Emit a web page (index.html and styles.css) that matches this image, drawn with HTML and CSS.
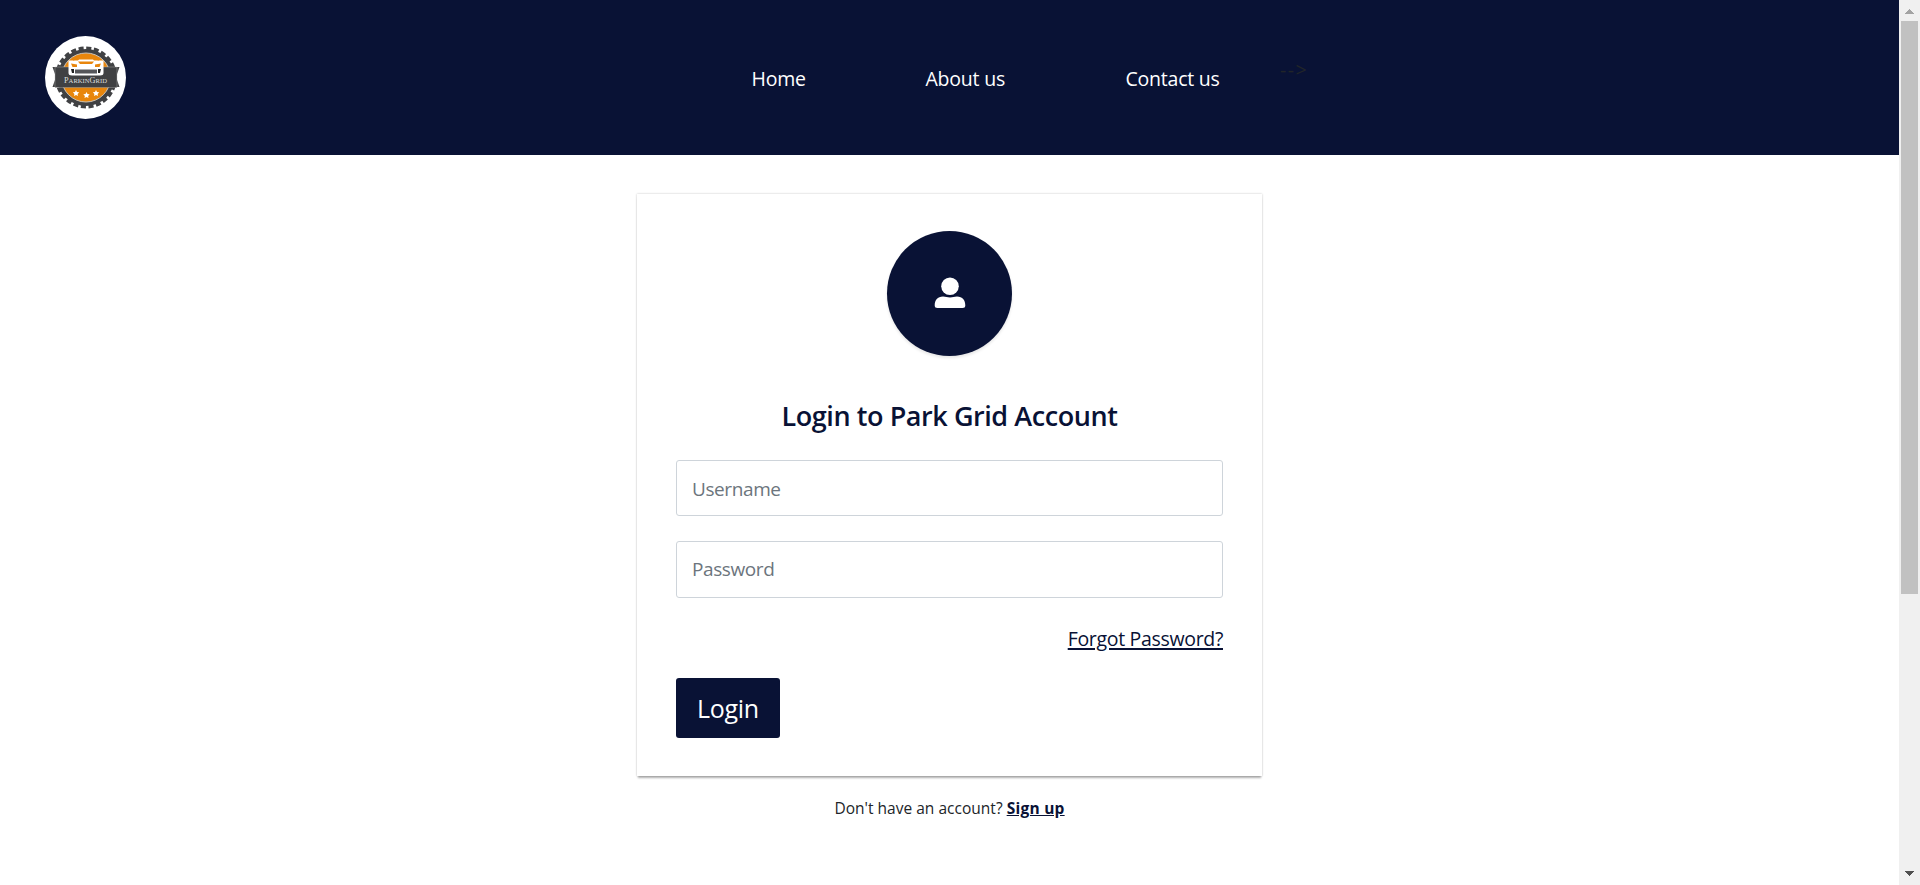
FILE: index.html
```html
<!DOCTYPE html>
<html lang="en">
<head>
<meta charset="utf-8">
<title>Park Grid Login</title>
<link rel="stylesheet" href="styles.css">
</head>
<body>
<div class="page">
  <header class="header">
    <svg class="logo" viewBox="0 0 81 83">
      <ellipse cx="40.5" cy="41.5" rx="40.5" ry="41.5" fill="#fff"/>
      <circle cx="41" cy="41.500" r="28.500" fill="#404143"/>
      <circle cx="41" cy="41.500" r="29" fill="none" stroke="#404143" stroke-width="4" stroke-dasharray="5 2.592"/>
      <circle cx="41" cy="41.500" r="24.500" fill="#e8860c" stroke="#c9c2b8" stroke-width="1"/>
      <path d="M7.500 31H15V51H7.500L11 41Z M74.500 31H67V51H74.500L71 41Z" fill="#404143"/>
      <path d="M10 31H72V51.500H10Z" fill="#404143" stroke="#b5b5b5" stroke-width=".4"/>
      <path d="M23.500 24.500H29L32 21.500H50L53 24.500H58.500V37Q58.500 39.500 55 39.500H27Q23.500 39.500 23.500 37V24.500Z" fill="#fff"/>
      <path d="M28 24.500L31 20.500H51L54 24.500H49L48 23.500H34L33 24.500Z" fill="#e8860c"/>
      <path d="M33 25.500H49L47 28H35Z" fill="#e8860c"/>
      <path d="M26 27.500L32 28.500V31H27.500Z M56 27.500L50 28.500V31H54.500Z" fill="#e8860c"/>
      <path d="M30 33.500H52V37.500H30Z" fill="#55565a"/>
      <path d="M26 33H29V37H27Z M56 33H53V37H55Z" fill="#222"/>
      <text x="19" y="47.300" textLength="43" lengthAdjust="spacingAndGlyphs" class="logo-text">P<tspan class="small">ARKIN</tspan>G<tspan class="small">RID</tspan></text>
      <g fill="#fff">
        <path id="star" d="M31 54L32 56L34.200 56.300L32.600 57.900L33 60L31 59L29 60L29.400 57.900L27.800 56.300L30 56Z"/>
        <use href="#star" x="10.500" y="2"/>
        <use href="#star" x="20" y="0"/>
      </g>
    </svg>
    <nav class="nav">
      <a class="home">Home</a><a class="about">About us</a><a class="contact">Contact us</a>
      <span class="stray">--&gt;</span>
    </nav>
  </header>
  <main class="main">
    <section class="card">
      <div class="avatar">
        <svg class="user" viewBox="0 0 32 32"><circle cx="16" cy="9.300" r="8.800" fill="#fff"/><path d="M9 19.500C12 19.500 13 20.500 16 20.500S20 19.500 23 19.500C28.500 19.500 31.300 23 31.300 28.500Q31.300 31 28.500 31H3.500Q.7 31 .7 28.500C.7 23 3.500 19.500 9 19.500Z" fill="#fff"/></svg>
      </div>
      <h1 class="title">Login to Park Grid Account</h1>
      <form class="form">
        <input class="field username" type="text" placeholder="Username">
        <input class="field password" type="password" placeholder="Password">
        <a class="forgot">Forgot Password?</a>
        <button class="login" type="button">Login</button>
      </form>
    </section>
    <p class="signup"><span class="ask">Don't have an account?</span> <a class="signup-link">Sign up</a></p>
  </main>
</div>
<aside class="scrollbar">
  <svg class="arrow" viewBox="0 0 21 21"><path d="M6 14L10.500 9L15 14Z" fill="#a3a3a3"/></svg>
  <div class="thumb"></div>
  <svg class="arrow" viewBox="0 0 21 21"><path d="M6 7L10.500 12L15 7Z" fill="#505050"/></svg>
</aside>
</body>
</html>
```
FILE: styles.css
```css
* { box-sizing: border-box; }
body {
  margin: 0;
  height: 885px;
  display: flex;
  overflow: hidden;
  background: #fff;
  color: #212529;
  font-family: "Segoe UI", "Open Sans", "Noto Sans", sans-serif;
}
.page { width: 1899px; }
.header {
  height: 155px;
  display: flex;
  padding: 36px 0 36px 45px;
  background: #091235;
}
.logo { width: 81px; height: 83px; flex: none; }
.logo-text { font: 7.5px "Liberation Serif", serif; fill: #ddd; }
.small { font-size: 6px; }
.nav {
  display: flex;
  align-items: flex-start;
  margin-left: 625.5px;
  padding-top: 28px;
  color: #fff;
  font-size: 19.5px;
  letter-spacing: -.22px;
  line-height: 30px;
  white-space: nowrap;
}
.home { width: 174px; }
.about { width: 200px; }
.contact { width: 154.5px; }
.stray { margin-top: -9px; color: #212529; letter-spacing: 1.5px; }
.main {
  display: flex;
  flex-direction: column;
  align-items: center;
  padding-top: 39px;
}
.card {
  width: 625px;
  height: 582px;
  display: flex;
  flex-direction: column;
  align-items: center;
  padding: 37px 39px 0;
  background: #fff;
  box-shadow: 0 0 2px rgba(0, 0, 0, .24), 0 3px 2px -1px rgba(0, 0, 0, .3);
}
.avatar {
  width: 125px;
  height: 125px;
  display: flex;
  align-items: center;
  justify-content: center;
  border-radius: 50%;
  background: #091235;
  box-shadow: 0 2px 3px rgba(0, 0, 0, .1);
}
.user { width: 32px; height: 32px; margin-bottom: 2px; }
.title {
  margin: 42px 0 0;
  height: 62px;
  color: #091235;
  font-size: 27px;
  font-weight: 600;
  letter-spacing: -.43px;
  line-height: 36px;
  white-space: nowrap;
}
.form { width: 547px; display: flex; flex-direction: column; }
.field {
  height: 56px;
  padding: 1px 15px 0;
  border: 1px solid #ced4da;
  border-radius: 3px;
  background: #fff;
  font: 19px "Segoe UI", "Open Sans", "Noto Sans", sans-serif;
  letter-spacing: -.4px;
}
.field::placeholder { color: #6c757d; opacity: 1; }
.password { height: 57px; margin-top: 25px; padding: 0 15px 1px; }
.forgot {
  align-self: flex-end;
  margin-top: 26px;
  height: 54px;
  color: #091235;
  font-size: 19.5px;
  letter-spacing: -.32px;
  line-height: 30px;
  text-decoration: underline;
  text-decoration-thickness: 2px;
  text-underline-offset: 2px;
  white-space: nowrap;
}
.login {
  width: 104px;
  height: 60px;
  padding: 0;
  border: 0;
  border-radius: 3px;
  background: #091235;
  color: #fff;
  font: 25px "Segoe UI", "Open Sans", "Noto Sans", sans-serif;
  letter-spacing: -.3px;
}
.signup {
  margin: 20px 0 0;
  font-size: 15.5px;
  letter-spacing: .02px;
  line-height: 24px;
  white-space: nowrap;
}
.signup-link {
  color: #091235;
  font-weight: 700;
  letter-spacing: .25px;
  text-decoration: underline;
}
.scrollbar {
  width: 21px;
  display: flex;
  flex-direction: column;
  background: #f0f0f0;
}
.arrow { width: 21px; height: 21px; flex: none; shape-rendering: crispEdges; }
.thumb { width: 17px; height: 573px; margin: 0 auto auto 2px; background: #c1c1c1; }
```
